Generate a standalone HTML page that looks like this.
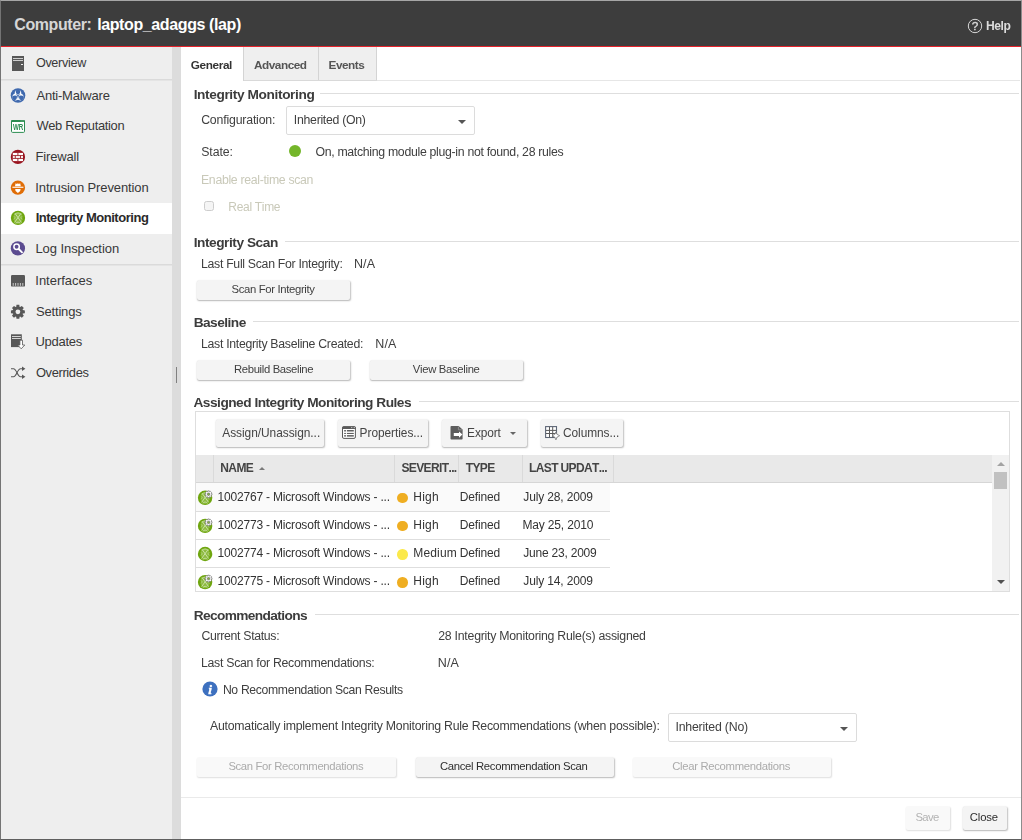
<!DOCTYPE html>
<html><head><meta charset="utf-8"><title>Computer: laptop_adaggs (lap)</title>
<style>
*{box-sizing:border-box;margin:0;padding:0}
html,body{width:1022px;height:840px;overflow:hidden;background:#fff}
body{position:relative;font-family:"Liberation Sans",sans-serif;font-size:12px;color:#333;font-kerning:none}
.a,.t,.b,.s,.r{position:absolute}
.t{white-space:nowrap;line-height:16px;z-index:5}
.b{background:#f4f4f4;border-radius:2px;box-shadow:.6px 1px 1.6px rgba(0,0,0,.25),0 .5px .5px rgba(0,0,0,.08)}
.b.off{background:#f9f9f9;box-shadow:.5px 1px 1.5px rgba(0,0,0,.13)}
.s{border:1px solid #dcdcdc;border-radius:2px;background:#fff}
.r{left:194px;height:1px;background:#dedede}
#frame{position:absolute;left:0;top:0;width:1022px;height:840px;border-style:solid;border-width:1px;border-color:#a6a6a6 #8c8c8c #5e5e5e #747474;z-index:50}
svg{position:absolute;overflow:visible}
#main{position:absolute;left:181px;top:47px;width:840px;height:792px;will-change:transform}
#main>div{position:absolute;left:-181px;top:-47px;width:0;height:0}
</style></head><body>
<div class="a" style="left:1px;top:1px;width:1020px;height:45px;background:#3d3d3d"></div>
<div class="a" style="left:1px;top:46px;width:1020px;height:1px;background:#e5222a"></div>
<span class="t" style="left:14.24px;top:16px;line-height:17px;font-size:16px;letter-spacing:-0.398px;color:#d6d6d6;font-weight:700;">Computer:</span>
<span class="t" style="left:97.18px;top:16px;line-height:17px;font-size:16px;letter-spacing:-0.389px;color:#fff;font-weight:700;">laptop_adaggs (lap)</span>
<svg style="left:967px;top:18px;will-change:transform" width="16" height="16" viewBox="0 0 16 16"><circle cx="8" cy="8" r="6.7" fill="none" stroke="#d8d8d8" stroke-width="1"/><text x="8" y="12.2" font-family="Liberation Sans" font-size="11.8" fill="#d8d8d8" stroke="#d8d8d8" stroke-width=".35" text-anchor="middle">?</text></svg>
<span class="t" style="left:986.09px;top:19px;line-height:14px;font-size:12.1px;letter-spacing:-0.472px;color:#dcdcdc;font-weight:700;will-change:transform;">Help</span>
<div class="a" style="left:1px;top:47px;width:171px;height:792px;background:#eee"></div>
<div class="a" style="left:172px;top:47px;width:9px;height:792px;background:#dcdcdc"></div>
<div class="a" style="left:176px;top:367px;width:1px;height:16px;background:#808080"></div>
<div class="a" style="left:1px;top:79px;width:171px;height:1px;background:#dadada"></div>
<div class="a" style="left:1px;top:80px;width:171px;height:1px;background:#e4e4e4"></div>
<div class="a" style="left:1px;top:264px;width:171px;height:1px;background:#dadada"></div>
<div class="a" style="left:1px;top:265px;width:171px;height:1px;background:#e4e4e4"></div>
<div class="a" style="left:1px;top:203px;width:171px;height:31px;background:#fff"></div>
<span class="t" style="left:35.90px;top:56px;line-height:14px;font-size:12.6px;letter-spacing:-0.306px;color:#383838;">Overview</span>
<span class="t" style="left:36.47px;top:88px;line-height:15px;font-size:13px;letter-spacing:-0.223px;color:#383838;">Anti-Malware</span>
<span class="t" style="left:36.44px;top:118px;line-height:15px;font-size:12.9px;letter-spacing:-0.332px;color:#383838;">Web Reputation</span>
<span class="t" style="left:35.43px;top:149px;line-height:15px;font-size:13px;letter-spacing:-0.150px;color:#383838;">Firewall</span>
<span class="t" style="left:35.30px;top:180px;line-height:15px;font-size:13px;letter-spacing:-0.120px;color:#383838;">Intrusion Prevention</span>
<span class="t" style="left:35.63px;top:210px;line-height:15px;font-size:13px;letter-spacing:-0.463px;color:#2a2a2a;font-weight:700;">Integrity Monitoring</span>
<span class="t" style="left:35.43px;top:241px;line-height:15px;font-size:13px;letter-spacing:-0.066px;color:#383838;">Log Inspection</span>
<span class="t" style="left:35.30px;top:273px;line-height:15px;font-size:13px;letter-spacing:-0.013px;color:#383838;">Interfaces</span>
<span class="t" style="left:35.91px;top:304px;line-height:15px;font-size:13px;letter-spacing:-0.159px;color:#383838;">Settings</span>
<span class="t" style="left:35.50px;top:334px;line-height:15px;font-size:13px;letter-spacing:-0.275px;color:#383838;">Updates</span>
<span class="t" style="left:35.89px;top:365px;line-height:15px;font-size:12.9px;letter-spacing:-0.355px;color:#383838;">Overrides</span>
<div class="a" style="left:0;top:0;width:172px;height:400px;will-change:transform;z-index:6"><svg style="left:0;top:0" width="172" height="400" viewBox="0 0 172 400"><rect x="12" y="56" width="12" height="15" fill="#575757"/><rect x="13" y="58" width="10" height="1" fill="#cfcfcf"/><rect x="13" y="60" width="10" height="1" fill="#cfcfcf"/><rect x="21" y="64" width="2" height="1" fill="#eee"/><circle cx="18.0" cy="95.5" r="7.3" fill="#3f69ae"/><mask id="bh" maskUnits="userSpaceOnUse" x="8" y="85" width="20" height="21"><rect x="8" y="85" width="20" height="21" fill="#000"/><circle cx="18.00" cy="93.20" r="3.3" fill="#fff"/><circle cx="20.25" cy="97.10" r="3.3" fill="#fff"/><circle cx="15.75" cy="97.10" r="3.3" fill="#fff"/><circle cx="18.00" cy="91.80" r="2.35" fill="#000"/><rect x="17.65" y="95.80" width="0.7" height="4" fill="#000" transform="rotate(180 18.0 95.8)"/><circle cx="21.46" cy="97.80" r="2.35" fill="#000"/><rect x="17.65" y="95.80" width="0.7" height="4" fill="#000" transform="rotate(300 18.0 95.8)"/><circle cx="14.54" cy="97.80" r="2.35" fill="#000"/><rect x="17.65" y="95.80" width="0.7" height="4" fill="#000" transform="rotate(420 18.0 95.8)"/><circle cx="18.0" cy="95.8" r="0.9" fill="#000"/></mask><rect x="8" y="85" width="20" height="21" fill="#fff" mask="url(#bh)"/><circle cx="18.0" cy="95.8" r="2.1" fill="none" stroke="#3f69ae" stroke-width=".55"/><rect x="11.5" y="120.5" width="13" height="11.9" rx="1" fill="#fff" stroke="#2a8c50" stroke-width="1"/><path d="M11 122 V121.2 Q11 120 12.2 120 H23.8 Q25 120 25 121.2 V122 Z" fill="#2a8c50"/><rect x="20.4" y="120.5" width="3.6" height="1" fill="#5aa877"/><text transform="translate(18.1 130.1) scale(0.7 1)" font-family="Liberation Sans" font-size="8.9" font-weight="700" fill="#2a8c50" text-anchor="middle">WR</text><circle cx="17.9" cy="156.9" r="7.15" fill="#99141f"/><rect x="12.8" y="152.9" width="10.2" height="8.2" fill="#fff"/><g stroke="#9a1c23" stroke-width="0.9"><path d="M12.8 155.6H23M12.8 158.4H23M17.9 152.9V155.6M15.3 155.6V158.4M20.5 155.6V158.4M17.9 158.4V161.1"/></g><circle cx="17.9" cy="187.7" r="7.15" fill="#e06d06"/><path d="M15 186.3 L15.6 183.2 L16.9 184 L17.9 183.3 L18.9 184 L20.2 183.2 L20.8 186.3 Z" fill="#fff"/><rect x="12.4" y="186.7" width="11" height="1.1" fill="#fff"/><path d="M15.2 188.9 H20.6 L20.2 191 L17.9 193 L15.6 191 Z" fill="#fff"/><circle cx="18" cy="217.9" r="7.15" fill="#6fa60f"/><ellipse cx="18" cy="218.1" rx="4.4" ry="5.9" fill="#cfe6ab" opacity=".32"/><g fill="none" stroke="#d3e8b4" stroke-width="1" stroke-linecap="round" opacity=".85"><path d="M15.10 213.50 L21.30 222.20 M20.90 213.50 L14.70 222.20"/><path d="M14.70 214.30 Q18.00 211.30 21.30 214.30" stroke-width=".8"/><path d="M15.80 223.30 Q18.00 220.50 20.20 223.30" stroke-width=".9"/><path d="M13.80 216.50 L15.40 217.70 L13.80 219.10 M22.20 216.50 L20.60 217.70 L22.20 219.10" stroke-width=".7" opacity=".7"/></g><circle cx="17.9" cy="248.4" r="7.15" fill="#5b4b90"/><circle cx="16.6" cy="246.8" r="2.7" fill="none" stroke="#fff" stroke-width="1.5"/><path d="M18.7 249 L22 252.3" stroke="#fff" stroke-width="1.9" stroke-linecap="round"/><rect x="11" y="275" width="14" height="11.6" rx="1.2" fill="#575757"/><rect x="12.7" y="283" width="1" height="2.8" fill="#c9c9c9"/><rect x="15.1" y="283" width="1" height="2.8" fill="#c9c9c9"/><rect x="17.5" y="283" width="1" height="2.8" fill="#c9c9c9"/><rect x="19.9" y="283" width="1" height="2.8" fill="#c9c9c9"/><rect x="22.3" y="283" width="1" height="2.8" fill="#c9c9c9"/><polygon points="16.49,304.84 19.31,304.84 19.63,306.90 20.14,307.11 21.82,305.88 23.82,307.88 22.59,309.56 22.80,310.07 24.86,310.39 24.86,313.21 22.80,313.53 22.59,314.04 23.82,315.72 21.82,317.72 20.14,316.49 19.63,316.70 19.31,318.76 16.49,318.76 16.17,316.70 15.66,316.49 13.98,317.72 11.98,315.72 13.21,314.04 13.00,313.53 10.94,313.21 10.94,310.39 13.00,310.07 13.21,309.56 11.98,307.88 13.98,305.88 15.66,307.11 16.17,306.90" fill="#575757"/><circle cx="17.9" cy="311.8" r="2.4" fill="#eee"/><rect x="11" y="334.3" width="10.8" height="12.8" fill="#575757"/><rect x="12" y="336" width="8.8" height="1" fill="#d4d4d4"/><rect x="12" y="338" width="8.8" height="1" fill="#d4d4d4"/><path d="M19.9 340.2 H22.5 V345 H24.8 L21.2 348.8 L17.6 345 H19.9 Z" fill="#fff" stroke="#575757" stroke-width="0.8"/><g fill="none" stroke="#575757" stroke-width="1.05"><path d="M11 368.8 H13.5 C16.5 368.8 17.5 376.8 20.5 376.8 H22.5"/><path d="M11 376.8 H13.5 C16.5 376.8 17.5 368.8 20.5 368.8 H22.5"/></g><path d="M22 366.6 L25.4 368.8 L22 371 Z M22 374.6 L25.4 376.8 L22 379 Z" fill="#575757"/></svg></div>
<div id="main"><div>
<div class="a" style="left:243px;top:80px;width:777px;height:1px;background:#e6e6e6"></div>
<div class="a" style="left:243px;top:47px;width:134px;height:34px;background:#efefef"></div>
<div class="a" style="left:243px;top:47px;width:1px;height:34px;background:#d4d4d4"></div>
<div class="a" style="left:318px;top:47px;width:1px;height:34px;background:#d4d4d4"></div>
<div class="a" style="left:376px;top:47px;width:1px;height:34px;background:#d4d4d4"></div>
<div class="a" style="left:244px;top:80px;width:133px;height:1px;background:#d9d9d9"></div>
<span class="t" style="left:190.82px;top:58px;line-height:14px;font-size:11.8px;letter-spacing:-0.404px;color:#333;font-weight:700;">General</span>
<span class="t" style="left:254.01px;top:58px;line-height:14px;font-size:11.8px;letter-spacing:-0.475px;color:#555;font-weight:700;">Advanced</span>
<span class="t" style="left:328.51px;top:58px;line-height:14px;font-size:11.8px;letter-spacing:-0.484px;color:#555;font-weight:700;">Events</span>
<div class="r" style="left:320px;top:93px;width:699px"></div>
<span class="t" style="left:193.68px;top:87px;line-height:15px;font-size:13.7px;letter-spacing:-0.388px;color:#3c3c3c;font-weight:700;">Integrity Monitoring</span>
<span class="t" style="left:201.18px;top:113px;line-height:14px;font-size:12.3px;letter-spacing:-0.179px;color:#404040;">Configuration:</span>
<div class="s" style="left:286px;top:106px;width:189px;height:29px"></div>
<span class="t" style="left:293.86px;top:113px;line-height:14px;font-size:12.3px;letter-spacing:-0.291px;color:#404040;">Inherited (On)</span>
<div class="a" style="left:458px;top:120px;border:4px solid transparent;border-top:4px solid #555;border-bottom:0"></div>
<span class="t" style="left:201.24px;top:145px;line-height:14px;font-size:12.3px;letter-spacing:-0.091px;color:#404040;">State:</span>
<div class="a" style="left:289px;top:145px;width:12px;height:12px;border-radius:50%;background:#74b62a"></div>
<span class="t" style="left:315.42px;top:145px;line-height:14px;font-size:12.3px;letter-spacing:-0.309px;color:#404040;">On, matching module plug-in not found, 28 rules</span>
<span class="t" style="left:200.99px;top:173px;line-height:14px;font-size:12.3px;letter-spacing:-0.323px;color:#c9c9b9;">Enable real-time scan</span>
<div class="a" style="left:204px;top:201px;width:10px;height:10px;border:1px solid #cdcdcd;border-radius:2.5px;background:#f5f5f5"></div>
<span class="t" style="left:228.32px;top:200px;line-height:14px;font-size:12.0px;letter-spacing:-0.308px;color:#c9c9b9;">Real Time</span>
<div class="r" style="left:285px;top:241px;width:734px"></div>
<span class="t" style="left:193.68px;top:235px;line-height:15px;font-size:13.7px;letter-spacing:-0.456px;color:#3c3c3c;font-weight:700;">Integrity Scan</span>
<span class="t" style="left:200.99px;top:257px;line-height:14px;font-size:12.3px;letter-spacing:-0.302px;color:#404040;">Last Full Scan For Integrity:</span>
<span class="t" style="left:353.97px;top:257px;line-height:14px;font-size:12.5px;letter-spacing:0.106px;color:#404040;">N/A</span>
<div class="b" style="left:197px;top:280px;width:153px;height:20px"></div>
<span class="t" style="left:231.49px;top:283px;line-height:12px;font-size:11.3px;letter-spacing:-0.332px;color:#404040;">Scan For Integrity</span>
<div class="r" style="left:253px;top:321px;width:766px"></div>
<span class="t" style="left:193.68px;top:315px;line-height:15px;font-size:13.7px;letter-spacing:-0.524px;color:#3c3c3c;font-weight:700;">Baseline</span>
<span class="t" style="left:200.99px;top:337px;line-height:14px;font-size:12.3px;letter-spacing:-0.296px;color:#404040;">Last Integrity Baseline Created:</span>
<span class="t" style="left:375.27px;top:337px;line-height:14px;font-size:12.5px;letter-spacing:0.106px;color:#404040;">N/A</span>
<div class="b" style="left:197px;top:360px;width:153px;height:20px"></div>
<span class="t" style="left:233.97px;top:363px;line-height:12px;font-size:11.3px;letter-spacing:-0.345px;color:#404040;">Rebuild Baseline</span>
<div class="b" style="left:370px;top:360px;width:153px;height:20px"></div>
<span class="t" style="left:412.85px;top:363px;line-height:12px;font-size:11.3px;letter-spacing:-0.327px;color:#404040;">View Baseline</span>
<div class="r" style="left:419px;top:401px;width:600px"></div>
<span class="t" style="left:193.46px;top:395px;line-height:15px;font-size:13.7px;letter-spacing:-0.497px;color:#3c3c3c;font-weight:700;">Assigned Integrity Monitoring Rules</span>
<div class="a" style="left:195px;top:411px;width:815px;height:181px;border:1px solid #dedede"></div>
<div class="b" style="left:216.4px;top:419.3px;width:107.99999999999997px;height:27.6px"></div>
<span class="t" style="left:222.28px;top:426px;line-height:14px;font-size:11.9px;letter-spacing:-0.032px;color:#444;">Assign/Unassign...</span>
<div class="b" style="left:338.4px;top:419.3px;width:90.0px;height:27.6px"></div>
<span class="t" style="left:359.62px;top:426px;line-height:14px;font-size:11.9px;letter-spacing:-0.049px;color:#444;">Properties...</span>
<div class="b" style="left:442.4px;top:419.3px;width:84.80000000000007px;height:27.6px"></div>
<span class="t" style="left:467.12px;top:426px;line-height:14px;font-size:11.9px;letter-spacing:-0.126px;color:#444;">Export</span>
<div class="b" style="left:541.4px;top:419.3px;width:81.70000000000005px;height:27.6px"></div>
<span class="t" style="left:563.00px;top:426px;line-height:14px;font-size:11.9px;letter-spacing:-0.065px;color:#444;">Columns...</span>
<div class="a" style="left:510px;top:432px;border:3.5px solid transparent;border-top:3.5px solid #666;border-bottom:0"></div>
<svg style="left:200px;top:420px" width="1" height="1" viewBox="200 420 1 1"><rect x="342.5" y="426.8" width="12.9" height="11.6" rx="1.4" fill="#fff" stroke="#5a5a5a" stroke-width="1"/><path d="M342 429 V427.8 Q342 426.3 343.5 426.3 H354.4 Q355.9 426.3 355.9 427.8 V429 Z" fill="#5a5a5a"/><rect x="351.1" y="427.1" width="1.2" height="1" fill="#c8c8c8"/><rect x="353.7" y="427.1" width="1.2" height="1" fill="#c8c8c8"/><rect x="344.1" y="430" width="1.9" height="1.5" fill="#707070"/><rect x="346.9" y="430" width="6.9" height="1.5" fill="#606060"/><rect x="344.1" y="432.9" width="1.9" height="1.1" fill="#707070"/><rect x="346.9" y="432.9" width="6.9" height="1.1" fill="#606060"/><rect x="344.1" y="435.1" width="1.9" height="1.5" fill="#707070"/><rect x="346.9" y="435.1" width="6.9" height="1.5" fill="#606060"/><path d="M451.3 426.1 H458.6 L462.6 429.6 V438.7 Q462.6 439.5 461.8 439.5 H451.3 Q450.5 439.5 450.5 438.7 V426.9 Q450.5 426.1 451.3 426.1 Z" fill="#5c5c5c"/><path d="M458.4 426.6 V429.8 H462.2" fill="none" stroke="#9a9a9a" stroke-width=".8"/><path d="M453.8 433 H459 V431.4 L462.4 434.6 L459 437.8 V436.1 H453.8 Z" fill="#fff"/><rect x="545.6" y="426.6" width="10.9" height="10.9" fill="#fff" stroke="#5d6676" stroke-width="1.1"/><path d="M549.5 427 V437.4 M552.7 427 V437.4 M546 430.4 H556.4 M546 433.5 H556.4" stroke="#5a5a5a" stroke-width="1" fill="none"/><path d="M555.9 431.9 Q556.4 435 559.7 435.7 Q556.4 436.4 555.9 439.9 Q555.4 436.4 552.3 435.7 Q555.4 435 555.9 431.9 Z" fill="#fff" stroke="#7a7a7a" stroke-width=".8" stroke-linejoin="round"/></svg>
<div class="a" style="left:196px;top:455px;width:796px;height:28px;background:#e9e9e9;border-bottom:1px solid #d6d6d6"></div>
<div class="a" style="left:213px;top:455px;width:1px;height:27px;background:#dadada"></div>
<div class="a" style="left:394px;top:455px;width:1px;height:27px;background:#dadada"></div>
<div class="a" style="left:458px;top:455px;width:1px;height:27px;background:#dadada"></div>
<div class="a" style="left:522px;top:455px;width:1px;height:27px;background:#dadada"></div>
<div class="a" style="left:613px;top:455px;width:1px;height:27px;background:#dadada"></div>
<span class="t" style="left:220.30px;top:461px;line-height:14px;font-size:12px;letter-spacing:-0.620px;color:#444;font-weight:700;">NAME</span>
<div class="a" style="left:259.2px;top:466.8px;border:3px solid transparent;border-bottom:3.2px solid #7a7a7a;border-top:0"></div>
<span class="t" style="left:401.45px;top:461px;line-height:14px;font-size:12px;letter-spacing:-0.620px;color:#444;font-weight:700;">SEVERIT...</span>
<span class="t" style="left:465.77px;top:461px;line-height:14px;font-size:12px;letter-spacing:-0.620px;color:#444;font-weight:700;">TYPE</span>
<span class="t" style="left:529.00px;top:461px;line-height:14px;font-size:12px;letter-spacing:-0.620px;color:#444;font-weight:700;">LAST UPDAT...</span>
<div class="a" style="left:992px;top:455px;width:17px;height:136px;background:#f1f1f1"></div>
<div class="a" style="left:994px;top:472px;width:13px;height:17px;background:#c1c1c1"></div>
<div class="a" style="left:996.5px;top:462px;border:4px solid transparent;border-bottom:4px solid #a3a3a3;border-top:0"></div>
<div class="a" style="left:996.5px;top:580px;border:4px solid transparent;border-top:4px solid #505050;border-bottom:0"></div>
<div class="a" style="left:196px;top:483px;width:414px;height:28px;background:#fafafa"></div>
<div class="a" style="left:196px;top:511px;width:414px;height:1px;background:#dedede"></div>
<div class="a" style="left:196px;top:539px;width:414px;height:1px;background:#dedede"></div>
<div class="a" style="left:196px;top:567px;width:414px;height:1px;background:#dedede"></div>
<svg style="left:200px;top:420px" width="1" height="1" viewBox="200 420 1 1"><circle cx="205.1" cy="497.8" r="7.2" fill="#6fa60f"/><ellipse cx="205.1" cy="498.0" rx="4.4" ry="5.9" fill="#cfe6ab" opacity=".32"/><g fill="none" stroke="#d3e8b4" stroke-width="1" stroke-linecap="round" opacity=".85"><path d="M202.20 493.40 L208.40 502.10 M208.00 493.40 L201.80 502.10"/><path d="M201.80 494.20 Q205.10 491.20 208.40 494.20" stroke-width=".8"/><path d="M202.90 503.20 Q205.10 500.40 207.30 503.20" stroke-width=".9"/><path d="M200.90 496.40 L202.50 497.60 L200.90 499.00 M209.30 496.40 L207.70 497.60 L209.30 499.00" stroke-width=".7" opacity=".7"/></g><polygon points="207.79,490.88 209.31,490.88 209.50,491.77 209.66,491.84 210.43,491.34 211.51,492.42 211.01,493.19 211.08,493.35 211.97,493.54 211.97,495.06 211.08,495.25 211.01,495.41 211.51,496.18 210.43,497.26 209.66,496.76 209.50,496.83 209.31,497.72 207.79,497.72 207.60,496.83 207.44,496.76 206.67,497.26 205.59,496.18 206.09,495.41 206.02,495.25 205.13,495.06 205.13,493.54 206.02,493.35 206.09,493.19 205.59,492.42 206.67,491.34 207.44,491.84 207.60,491.77" fill="#fff" stroke="#7c7c7c" stroke-width="0.8" stroke-linejoin="round"/><circle cx="208.54999999999998" cy="494.3" r="1.2" fill="#8ab83a" stroke="#6e6e6e" stroke-width="0.8"/></svg>
<span class="t" style="left:217.59px;top:490px;line-height:14px;font-size:12px;letter-spacing:-0.195px;color:#333;">1002767 - Microsoft Windows - ...</span>
<div class="a" style="left:397px;top:492.8px;width:10.5px;height:10.5px;border-radius:50%;background:#efae22"></div>
<span class="t" style="left:413.32px;top:490px;line-height:14px;font-size:12px;letter-spacing:0.200px;color:#333;">High</span>
<span class="t" style="left:459.72px;top:490px;line-height:14px;font-size:12px;letter-spacing:-0.134px;color:#333;">Defined</span>
<span class="t" style="left:523.31px;top:490px;line-height:14px;font-size:12px;letter-spacing:-0.144px;color:#333;">July 28, 2009</span>
<svg style="left:200px;top:420px" width="1" height="1" viewBox="200 420 1 1"><circle cx="205.1" cy="525.9" r="7.2" fill="#6fa60f"/><ellipse cx="205.1" cy="526.1" rx="4.4" ry="5.9" fill="#cfe6ab" opacity=".32"/><g fill="none" stroke="#d3e8b4" stroke-width="1" stroke-linecap="round" opacity=".85"><path d="M202.20 521.50 L208.40 530.20 M208.00 521.50 L201.80 530.20"/><path d="M201.80 522.30 Q205.10 519.30 208.40 522.30" stroke-width=".8"/><path d="M202.90 531.30 Q205.10 528.50 207.30 531.30" stroke-width=".9"/><path d="M200.90 524.50 L202.50 525.70 L200.90 527.10 M209.30 524.50 L207.70 525.70 L209.30 527.10" stroke-width=".7" opacity=".7"/></g><polygon points="207.79,518.98 209.31,518.98 209.50,519.87 209.66,519.94 210.43,519.44 211.51,520.52 211.01,521.29 211.08,521.45 211.97,521.64 211.97,523.16 211.08,523.35 211.01,523.51 211.51,524.28 210.43,525.36 209.66,524.86 209.50,524.93 209.31,525.82 207.79,525.82 207.60,524.93 207.44,524.86 206.67,525.36 205.59,524.28 206.09,523.51 206.02,523.35 205.13,523.16 205.13,521.64 206.02,521.45 206.09,521.29 205.59,520.52 206.67,519.44 207.44,519.94 207.60,519.87" fill="#fff" stroke="#7c7c7c" stroke-width="0.8" stroke-linejoin="round"/><circle cx="208.54999999999998" cy="522.4" r="1.2" fill="#8ab83a" stroke="#6e6e6e" stroke-width="0.8"/></svg>
<span class="t" style="left:217.59px;top:518px;line-height:14px;font-size:12px;letter-spacing:-0.195px;color:#333;">1002773 - Microsoft Windows - ...</span>
<div class="a" style="left:397px;top:520.9px;width:10.5px;height:10.5px;border-radius:50%;background:#efae22"></div>
<span class="t" style="left:413.32px;top:518px;line-height:14px;font-size:12px;letter-spacing:0.200px;color:#333;">High</span>
<span class="t" style="left:459.72px;top:518px;line-height:14px;font-size:12px;letter-spacing:-0.134px;color:#333;">Defined</span>
<span class="t" style="left:522.52px;top:518px;line-height:14px;font-size:12px;letter-spacing:-0.169px;color:#333;">May 25, 2010</span>
<svg style="left:200px;top:420px" width="1" height="1" viewBox="200 420 1 1"><circle cx="205.1" cy="554.0" r="7.2" fill="#6fa60f"/><ellipse cx="205.1" cy="554.2" rx="4.4" ry="5.9" fill="#cfe6ab" opacity=".32"/><g fill="none" stroke="#d3e8b4" stroke-width="1" stroke-linecap="round" opacity=".85"><path d="M202.20 549.60 L208.40 558.30 M208.00 549.60 L201.80 558.30"/><path d="M201.80 550.40 Q205.10 547.40 208.40 550.40" stroke-width=".8"/><path d="M202.90 559.40 Q205.10 556.60 207.30 559.40" stroke-width=".9"/><path d="M200.90 552.60 L202.50 553.80 L200.90 555.20 M209.30 552.60 L207.70 553.80 L209.30 555.20" stroke-width=".7" opacity=".7"/></g></svg>
<span class="t" style="left:217.59px;top:546px;line-height:14px;font-size:12px;letter-spacing:-0.195px;color:#333;">1002774 - Microsoft Windows - ...</span>
<div class="a" style="left:397px;top:549.0px;width:10.5px;height:10.5px;border-radius:50%;background:#fbe94b"></div>
<span class="t" style="left:413.32px;top:546px;line-height:14px;font-size:12px;letter-spacing:0.139px;color:#333;">Medium</span>
<span class="t" style="left:459.72px;top:546px;line-height:14px;font-size:12px;letter-spacing:-0.134px;color:#333;">Defined</span>
<span class="t" style="left:523.31px;top:546px;line-height:14px;font-size:12px;letter-spacing:-0.218px;color:#333;">June 23, 2009</span>
<svg style="left:200px;top:420px" width="1" height="1" viewBox="200 420 1 1"><circle cx="205.1" cy="582.1" r="7.2" fill="#6fa60f"/><ellipse cx="205.1" cy="582.3000000000001" rx="4.4" ry="5.9" fill="#cfe6ab" opacity=".32"/><g fill="none" stroke="#d3e8b4" stroke-width="1" stroke-linecap="round" opacity=".85"><path d="M202.20 577.70 L208.40 586.40 M208.00 577.70 L201.80 586.40"/><path d="M201.80 578.50 Q205.10 575.50 208.40 578.50" stroke-width=".8"/><path d="M202.90 587.50 Q205.10 584.70 207.30 587.50" stroke-width=".9"/><path d="M200.90 580.70 L202.50 581.90 L200.90 583.30 M209.30 580.70 L207.70 581.90 L209.30 583.30" stroke-width=".7" opacity=".7"/></g><polygon points="207.79,575.18 209.31,575.18 209.50,576.07 209.66,576.14 210.43,575.64 211.51,576.72 211.01,577.49 211.08,577.65 211.97,577.84 211.97,579.36 211.08,579.55 211.01,579.71 211.51,580.48 210.43,581.56 209.66,581.06 209.50,581.13 209.31,582.02 207.79,582.02 207.60,581.13 207.44,581.06 206.67,581.56 205.59,580.48 206.09,579.71 206.02,579.55 205.13,579.36 205.13,577.84 206.02,577.65 206.09,577.49 205.59,576.72 206.67,575.64 207.44,576.14 207.60,576.07" fill="#fff" stroke="#7c7c7c" stroke-width="0.8" stroke-linejoin="round"/><circle cx="208.54999999999998" cy="578.6" r="1.2" fill="#8ab83a" stroke="#6e6e6e" stroke-width="0.8"/></svg>
<span class="t" style="left:217.59px;top:574px;line-height:14px;font-size:12px;letter-spacing:-0.195px;color:#333;">1002775 - Microsoft Windows - ...</span>
<div class="a" style="left:397px;top:577.1px;width:10.5px;height:10.5px;border-radius:50%;background:#efae22"></div>
<span class="t" style="left:413.32px;top:574px;line-height:14px;font-size:12px;letter-spacing:0.200px;color:#333;">High</span>
<span class="t" style="left:459.72px;top:574px;line-height:14px;font-size:12px;letter-spacing:-0.134px;color:#333;">Defined</span>
<span class="t" style="left:523.31px;top:574px;line-height:14px;font-size:12px;letter-spacing:-0.144px;color:#333;">July 14, 2009</span>
<div class="a" style="left:196px;top:591px;width:813px;height:1px;background:#dedede;z-index:6"></div>
<div class="a" style="left:196px;top:592px;width:813px;height:10px;background:#fff;z-index:6"></div>
<div class="r" style="left:315px;top:614px;width:704px"></div>
<span class="t" style="left:193.68px;top:608px;line-height:15px;font-size:13.7px;letter-spacing:-0.613px;color:#3c3c3c;font-weight:700;">Recommendations</span>
<span class="t" style="left:201.38px;top:629px;line-height:14px;font-size:12.3px;letter-spacing:-0.319px;color:#404040;">Current Status:</span>
<span class="t" style="left:438.28px;top:629px;line-height:14px;font-size:12.3px;letter-spacing:-0.249px;color:#404040;">28 Integrity Monitoring Rule(s) assigned</span>
<span class="t" style="left:200.99px;top:656px;line-height:14px;font-size:12.3px;letter-spacing:-0.280px;color:#404040;">Last Scan for Recommendations:</span>
<span class="t" style="left:437.87px;top:656px;line-height:14px;font-size:12.5px;letter-spacing:0.056px;color:#404040;">N/A</span>
<svg style="left:201.5px;top:681px" width="16" height="16" viewBox="0 0 16 16"><circle cx="8" cy="8" r="7.6" fill="#3d70bf"/><text x="8.1" y="12.6" font-family="Liberation Serif" font-size="13.5" font-weight="700" font-style="italic" fill="#fff" stroke="#fff" stroke-width=".4" text-anchor="middle">i</text></svg>
<span class="t" style="left:222.90px;top:683px;line-height:14px;font-size:12.2px;letter-spacing:-0.325px;color:#404040;">No Recommendation Scan Results</span>
<span class="t" style="left:209.98px;top:719px;line-height:14px;font-size:12.3px;letter-spacing:-0.234px;color:#404040;">Automatically implement Integrity Monitoring Rule Recommendations (when possible):</span>
<div class="s" style="left:668px;top:713px;width:189px;height:29px"></div>
<span class="t" style="left:675.46px;top:720px;line-height:14px;font-size:12.3px;letter-spacing:-0.192px;color:#404040;">Inherited (No)</span>
<div class="a" style="left:840px;top:727px;border:4px solid transparent;border-top:4px solid #555;border-bottom:0"></div>
<div class="b off" style="left:197px;top:757px;width:198.5px;height:20px"></div>
<span class="t" style="left:228.39px;top:760px;line-height:12px;font-size:11.3px;letter-spacing:-0.342px;color:#ababab;">Scan For Recommendations</span>
<div class="b" style="left:415.5px;top:757px;width:198px;height:20px"></div>
<span class="t" style="left:439.93px;top:760px;line-height:12px;font-size:11.3px;letter-spacing:-0.315px;color:#2e2e2e;">Cancel Recommendation Scan</span>
<div class="b off" style="left:632.5px;top:757px;width:198px;height:20px"></div>
<span class="t" style="left:672.13px;top:760px;line-height:12px;font-size:11.3px;letter-spacing:-0.304px;color:#ababab;">Clear Recommendations</span>
<div class="a" style="left:181px;top:797px;width:840px;height:1px;background:#eaeaea"></div>
<div class="b off" style="left:906px;top:806px;width:43.5px;height:24px"></div>
<span class="t" style="left:915.39px;top:811px;line-height:12px;font-size:11.3px;letter-spacing:-0.620px;color:#b3b3b3;">Save</span>
<div class="b" style="left:963px;top:806px;width:43.5px;height:24px"></div>
<span class="t" style="left:969.83px;top:811px;line-height:12px;font-size:11.3px;letter-spacing:-0.154px;color:#2e2e2e;">Close</span>
</div></div>
<div id="frame"></div>
</body></html>
